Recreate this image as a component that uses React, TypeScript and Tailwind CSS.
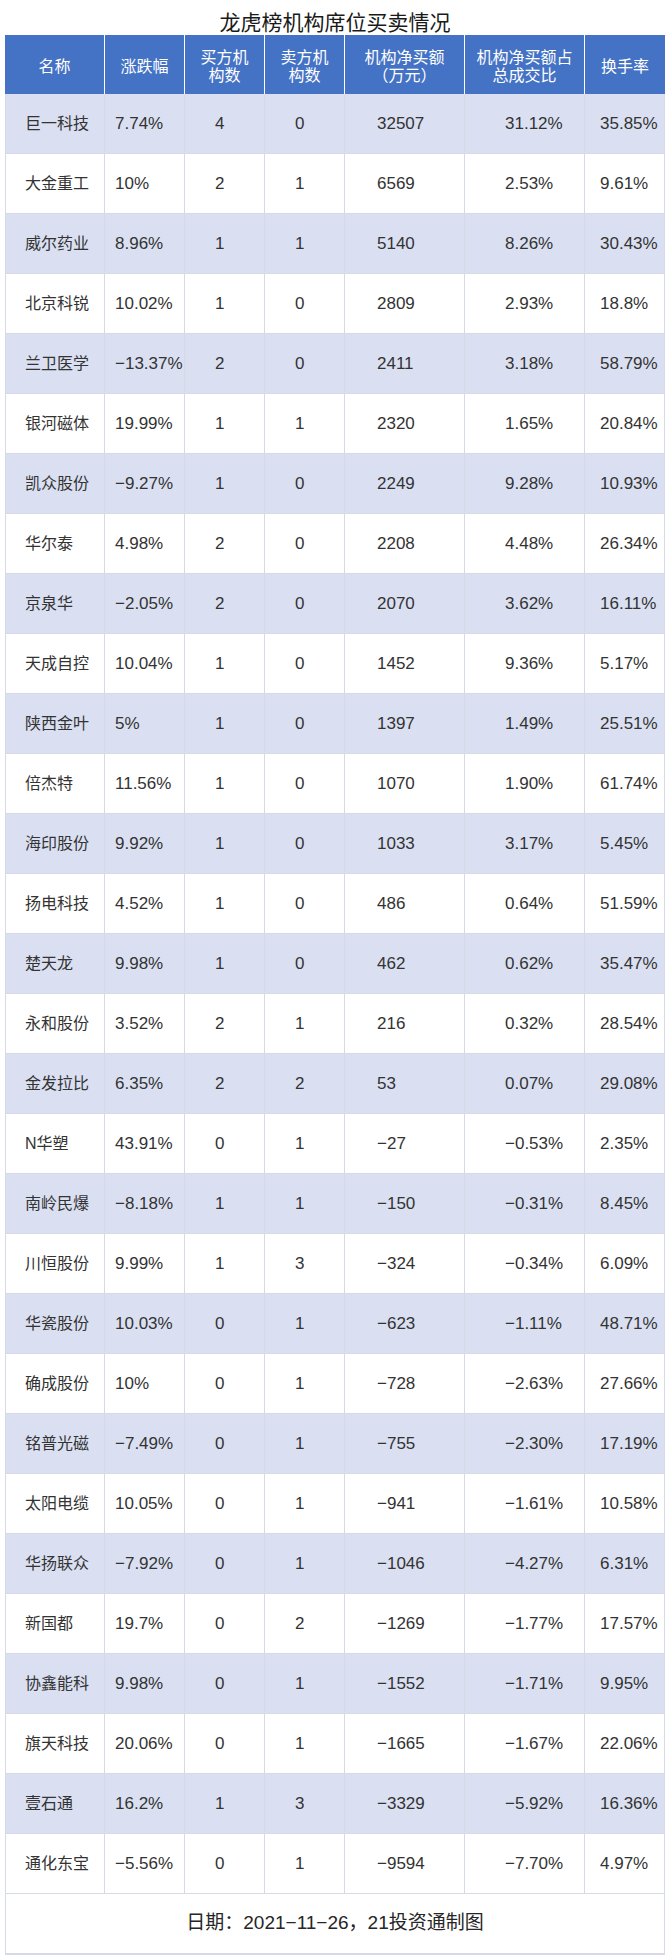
import React from "react";

type Row = [string, string, string, string, string, string, string];

const rows: Row[] = [
  ["巨一科技", "7.74%", "4", "0", "32507", "31.12%", "35.85%"],
  ["大金重工", "10%", "2", "1", "6569", "2.53%", "9.61%"],
  ["威尔药业", "8.96%", "1", "1", "5140", "8.26%", "30.43%"],
  ["北京科锐", "10.02%", "1", "0", "2809", "2.93%", "18.8%"],
  ["兰卫医学", "−13.37%", "2", "0", "2411", "3.18%", "58.79%"],
  ["银河磁体", "19.99%", "1", "1", "2320", "1.65%", "20.84%"],
  ["凯众股份", "−9.27%", "1", "0", "2249", "9.28%", "10.93%"],
  ["华尔泰", "4.98%", "2", "0", "2208", "4.48%", "26.34%"],
  ["京泉华", "−2.05%", "2", "0", "2070", "3.62%", "16.11%"],
  ["天成自控", "10.04%", "1", "0", "1452", "9.36%", "5.17%"],
  ["陕西金叶", "5%", "1", "0", "1397", "1.49%", "25.51%"],
  ["倍杰特", "11.56%", "1", "0", "1070", "1.90%", "61.74%"],
  ["海印股份", "9.92%", "1", "0", "1033", "3.17%", "5.45%"],
  ["扬电科技", "4.52%", "1", "0", "486", "0.64%", "51.59%"],
  ["楚天龙", "9.98%", "1", "0", "462", "0.62%", "35.47%"],
  ["永和股份", "3.52%", "2", "1", "216", "0.32%", "28.54%"],
  ["金发拉比", "6.35%", "2", "2", "53", "0.07%", "29.08%"],
  ["N华塑", "43.91%", "0", "1", "−27", "−0.53%", "2.35%"],
  ["南岭民爆", "−8.18%", "1", "1", "−150", "−0.31%", "8.45%"],
  ["川恒股份", "9.99%", "1", "3", "−324", "−0.34%", "6.09%"],
  ["华瓷股份", "10.03%", "0", "1", "−623", "−1.11%", "48.71%"],
  ["确成股份", "10%", "0", "1", "−728", "−2.63%", "27.66%"],
  ["铭普光磁", "−7.49%", "0", "1", "−755", "−2.30%", "17.19%"],
  ["太阳电缆", "10.05%", "0", "1", "−941", "−1.61%", "10.58%"],
  ["华扬联众", "−7.92%", "0", "1", "−1046", "−4.27%", "6.31%"],
  ["新国都", "19.7%", "0", "2", "−1269", "−1.77%", "17.57%"],
  ["协鑫能科", "9.98%", "0", "1", "−1552", "−1.71%", "9.95%"],
  ["旗天科技", "20.06%", "0", "1", "−1665", "−1.67%", "22.06%"],
  ["壹石通", "16.2%", "1", "3", "−3329", "−5.92%", "16.36%"],
  ["通化东宝", "−5.56%", "0", "1", "−9594", "−7.70%", "4.97%"],
];

const headers: string[][] = [
  ["名称"],
  ["涨跌幅"],
  ["买方机", "构数"],
  ["卖方机", "构数"],
  ["机构净买额", "（万元）"],
  ["机构净买额占", "总成交比"],
  ["换手率"],
];

const cellCls = [
  "border-l border-r border-[#d6dae4] pl-[19px] text-[16px]",
  "border-r border-[#d6dae4] pl-[10px] text-[17px]",
  "border-r border-[#d6dae4] pl-[30px] text-[17px]",
  "border-r border-[#d6dae4] pl-[30px] text-[17px]",
  "border-r border-[#d6dae4] pl-[32px] text-[17px]",
  "border-r border-[#d6dae4] pl-[40px] text-[17px]",
  "border-r border-[#d6dae4] pl-[15px] text-[17px]",
];

const gridCls = "grid grid-cols-[100px_80px_80px_80px_120px_120px_80px]";

export default function App() {
  return (
    <div className="w-[670px] h-[1960px] bg-white font-['Liberation_Sans','Noto_Sans_CJK_SC',sans-serif] text-[#333]">
      <div className="h-[35px] pt-[12px] text-center text-[21px] leading-[21px] text-[#1a1a1a]">
        龙虎榜机构席位买卖情况
      </div>
      <div className="ml-[5px] w-[660px]">
        <div className={`${gridCls} h-[59px] bg-[#4472c4] text-white`}>
          {headers.map((h, i) => (
            <div
              key={i}
              className={`flex flex-col items-center justify-center pt-[5px] text-[16px] leading-[18px] ${
                i < 6 ? "border-r border-white" : ""
              }`}
            >
              {h.map((l, j) => (
                <span key={j} className="whitespace-nowrap">
                  {l}
                </span>
              ))}
            </div>
          ))}
        </div>
        {rows.map((r, ri) => (
          <div
            key={ri}
            className={`${gridCls} h-[60px] border-b border-[#d6dae4] ${
              ri % 2 === 0 ? "bg-[#dae0f2]" : "bg-white"
            }`}
          >
            {r.map((v, ci) => (
              <div key={ci} className={`flex items-center whitespace-nowrap ${cellCls[ci]}`}>
                {v}
              </div>
            ))}
          </div>
        ))}
        <div className="h-[61px] border-l border-r border-b-2 border-[#d6dae4] flex items-center justify-center text-[19px] text-[#262626]">
          日期：2021−11−26，21投资通制图
        </div>
      </div>
    </div>
  );
}
